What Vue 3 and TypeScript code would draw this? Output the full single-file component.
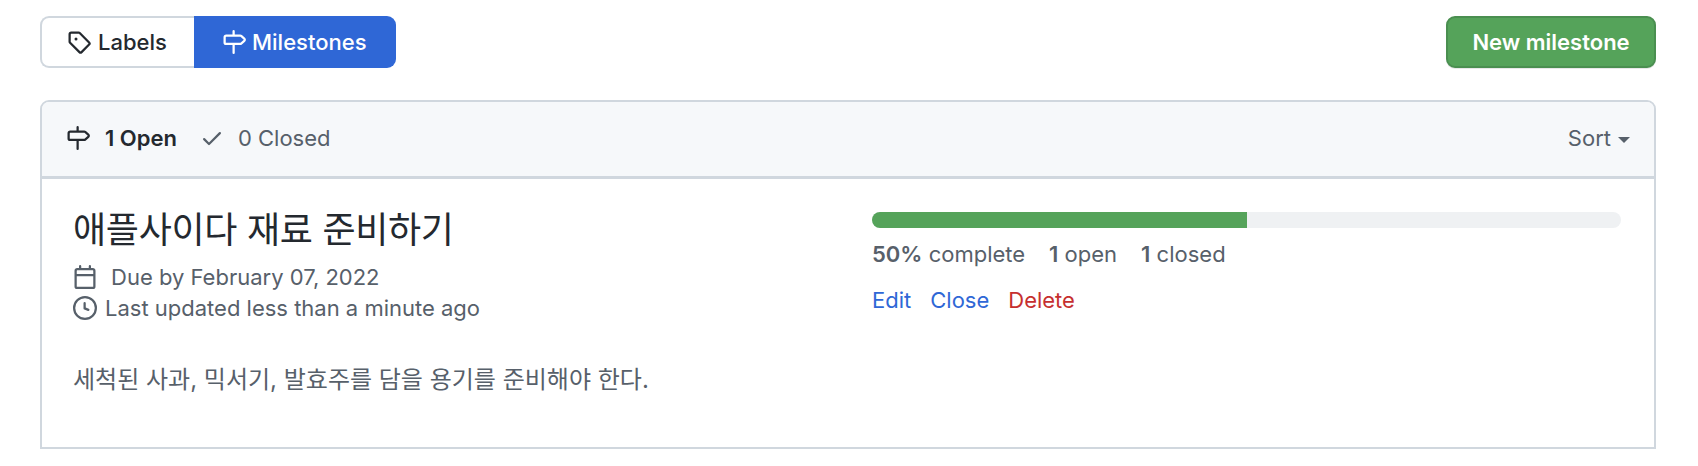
<script setup lang="ts">
const icons = {
  tag: 'M2.5 7.775V2.75a.25.25 0 01.25-.25h5.025a.25.25 0 01.177.073l6.25 6.25a.25.25 0 010 .354l-5.025 5.025a.25.25 0 01-.354 0l-6.25-6.25a.25.25 0 01-.073-.177zm-1.5 0V2.75C1 1.784 1.784 1 2.75 1h5.025c.464 0 .91.184 1.238.513l6.25 6.25a1.75 1.75 0 010 2.474l-5.026 5.026a1.75 1.75 0 01-2.474 0l-6.25-6.25A1.75 1.75 0 011 7.775zM6 5a1 1 0 100 2 1 1 0 000-2z',
  milestone: 'M7.75 0a.75.75 0 01.75.75V3h3.634c.414 0 .814.147 1.13.414l2.07 1.75a1.75 1.75 0 010 2.672l-2.07 1.75a1.75 1.75 0 01-1.13.414H8.5v5.25a.75.75 0 11-1.5 0V10H2.75A1.75 1.75 0 011 8.25v-3.5C1 3.784 1.784 3 2.75 3H7V.75A.75.75 0 017.75 0zm0 8.5h4.384a.25.25 0 00.161-.06l2.07-1.75a.25.25 0 000-.38l-2.07-1.75a.25.25 0 00-.161-.06H2.75a.25.25 0 00-.25.25v3.5c0 .138.112.25.25.25h5z',
  check: 'M13.78 4.22a.75.75 0 010 1.06l-7.25 7.25a.75.75 0 01-1.06 0L2.22 9.28a.75.75 0 011.06-1.06L6 10.94l6.72-6.72a.75.75 0 011.06 0z',
  calendar: 'M4.75 0a.75.75 0 01.75.75V2h5V.75a.75.75 0 011.5 0V2h1.25c.966 0 1.75.784 1.75 1.75v10.5A1.75 1.75 0 0113.25 16H2.75A1.75 1.75 0 011 14.25V3.75C1 2.784 1.784 2 2.75 2H4V.75A.75.75 0 014.75 0zm0 3.5h8.5a.25.25 0 01.25.25V6h-11V3.75a.25.25 0 01.25-.25h2zm-2.25 4v6.75c0 .138.112.25.25.25h10.5a.25.25 0 00.25-.25V7.5h-11z',
  clock: 'M1.5 8a6.5 6.5 0 1013 0 6.5 6.5 0 00-13 0zM8 0a8 8 0 100 16A8 8 0 008 0zm.5 4.75a.75.75 0 00-1.5 0v3.5a.75.75 0 00.471.696l2.5 1a.75.75 0 00.557-1.392L8.5 7.742V4.75z',
}

const percent = 50
</script>

<template>
  <div class="page">
    <div class="subnav">
      <div class="tabs">
        <a class="tab">
          <svg class="icon" viewBox="0 0 16 16"><path fill-rule="evenodd" :d="icons.tag" /></svg>
          Labels
        </a>
        <a class="tab selected">
          <svg class="icon" viewBox="0 0 16 16"><path fill-rule="evenodd" :d="icons.milestone" /></svg>
          Milestones
        </a>
      </div>
      <button class="new-btn">New milestone</button>
    </div>

    <div class="box">
      <div class="box-header">
        <div class="states">
          <a class="state open">
            <svg class="icon" viewBox="0 0 16 16"><path fill-rule="evenodd" :d="icons.milestone" /></svg>
            1 Open
          </a>
          <a class="state">
            <svg class="icon" viewBox="0 0 16 16"><path fill-rule="evenodd" :d="icons.check" /></svg>
            0 Closed
          </a>
        </div>
        <div class="sort">Sort <span class="caret"></span></div>
      </div>

      <div class="milestone">
        <div class="info">
          <h2 class="title">애플사이다 재료 준비하기</h2>
          <div class="meta">
            <div class="meta-row due">
              <svg class="icon" viewBox="0 0 16 16"><path fill-rule="evenodd" :d="icons.calendar" /></svg>
              Due by February 07, 2022
            </div>
            <div class="meta-row">
              <svg class="icon" viewBox="0 0 16 16"><path fill-rule="evenodd" :d="icons.clock" /></svg>
              Last updated less than a minute ago
            </div>
          </div>
          <p class="desc">세척된 사과, 믹서기, 발효주를 담을 용기를 준비해야 한다.</p>
        </div>

        <div class="progress-col">
          <div class="progress">
            <span class="progress-fill" :style="{ width: percent + '%' }"></span>
          </div>
          <div class="stats">
            <span><b>50%</b> complete</span>
            <span><b>1</b> open</span>
            <span><b>1</b> closed</span>
          </div>
          <div class="actions">
            <a class="link">Edit</a>
            <a class="link">Close</a>
            <a class="link danger">Delete</a>
          </div>
        </div>
      </div>
    </div>
  </div>
</template>

<style>
html,
body {
  margin: 0;
  background: #fff;
}
</style>

<style scoped>
.page {
  padding: 16px 42px 0 40px;
  font-family: Inter, 'Noto Sans CJK KR', sans-serif;
  font-size: 22px;
  line-height: 30px;
  color: #24292f;
}

.icon {
  width: 24px;
  height: 24px;
  fill: currentColor;
  flex: none;
}

.subnav {
  display: flex;
  justify-content: space-between;
  align-items: flex-start;
  margin-bottom: 32px;
}

.tabs {
  display: flex;
}

.tab {
  height: 52px;
  box-sizing: border-box;
  display: flex;
  align-items: center;
  gap: 7px;
  width: 154px;
  padding-left: 25px;
  padding-bottom: 1px;
  border: 2px solid #d0d7de;
  border-right: 0;
  border-radius: 9px 0 0 9px;
  font-weight: 500;
}

.tab.selected {
  color: #fff;
  background: #2f67d6;
  border: 0;
  border-radius: 0 9px 9px 0;
  width: 202px;
  padding-left: 28px;
  gap: 6px;
}

.new-btn {
  height: 52px;
  width: 210px;
  box-sizing: border-box;
  padding: 0 0 1px;
  background: #55a35a;
  border: 2px solid #4a8f50;
  border-radius: 9px;
  color: #fff;
  font: 600 22px Inter, sans-serif;
  box-shadow: 0 1px 0 rgba(27, 31, 36, 0.1);
}

.box {
  border: 2px solid #d0d7de;
  border-radius: 9px 9px 0 0;
  height: 349px;
  box-sizing: border-box;
}

.box-header {
  height: 77px;
  box-sizing: border-box;
  background: #f6f8fa;
  border-bottom: 3px solid #d0d7de;
  border-radius: 7px 7px 0 0;
  display: flex;
  justify-content: space-between;
  align-items: center;
  padding: 0 24px 2px;
}

.states {
  display: flex;
  gap: 23px;
}

.state {
  display: flex;
  align-items: center;
  gap: 14px;
  color: #57606a;
}

.state.open {
  color: #24292f;
  font-weight: 600;
  gap: 15px;
}

.sort {
  color: #57606a;
  display: flex;
  align-items: center;
  gap: 7px;
}

.caret {
  width: 0;
  height: 0;
  border: 6px solid transparent;
  border-top-color: #57606a;
  border-bottom: 0;
  margin-top: 3px;
}

.milestone {
  display: flex;
  padding: 33px 33px 0 31px;
}

.info {
  width: 799px;
  flex: none;
  margin-top: -4px;
}

.title {
  margin: 0;
  font-size: 36px;
  font-weight: 400;
  line-height: 45px;
  letter-spacing: -0.3px;
}

.meta {
  margin-top: 9px;
  color: #57606a;
}

.meta-row {
  display: flex;
  align-items: center;
  gap: 8px;
  height: 30px;
}

.meta-row.due {
  gap: 14px;
  margin-bottom: 1px;
}

.desc {
  margin: 42px 0 0;
  color: #57606a;
  font-size: 24px;
}

.progress-col {
  flex: 1;
}

.progress {
  height: 16px;
  background: #eff1f3;
  border-radius: 9px;
  overflow: hidden;
}

.progress-fill {
  display: block;
  height: 100%;
  background: #55a35a;
}

.stats {
  margin-top: 11px;
  display: flex;
  gap: 24px;
  color: #57606a;
}

.stats b {
  font-weight: 600;
}

.actions {
  margin-top: 16px;
  display: flex;
  gap: 19px;
}

.link {
  color: #2f67d6;
}

.link.danger {
  color: #c62f2f;
}
</style>
